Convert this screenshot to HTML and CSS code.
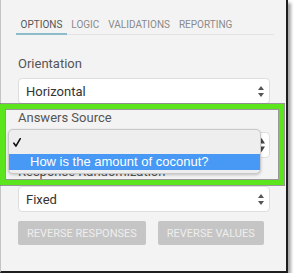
FILE: index.html
```html
<!DOCTYPE html>
<html>
<head>
<meta charset="utf-8">
<link rel="stylesheet" href="styles.css">
</head>
<body>
<div class="panel">
  <div class="tabs">
    <span class="tab active">Options</span>
    <span class="tab">Logic</span>
    <span class="tab">Validations</span>
    <span class="tab">Reporting</span>
  </div>
  <div class="form">
    <div class="label">Orientation</div>
    <div class="select">
      <span class="value">Horizontal</span>
      <svg class="arrows" width="6" height="11" viewBox="0 0 6 11"><path d="M3 0L6 4H0Z M0 7H6L3 11Z" fill="#555"/></svg>
    </div>
    <div class="label">Answers Source</div>
    <div class="field">
      <div class="select">
        <span class="value"></span>
        <svg class="arrows big" width="7" height="14" viewBox="0 0 7 14"><path d="M3.5 0L7 5.5H0Z M0 8.5H7L3.5 14Z" fill="#444"/></svg>
      </div>
      <div class="popup">
        <div class="item first"><svg class="check" width="8" height="9" viewBox="0 0 8 9"><path d="M0.9 5.2L2.9 8.1L7.3 0.7" fill="none" stroke="#111" stroke-width="1.6" stroke-linecap="round" stroke-linejoin="round"/></svg></div>
        <div class="item selected">How is the amount of coconut?</div>
      </div>
    </div>
    <div class="label">Response Randomization</div>
    <div class="select">
      <span class="value">Fixed</span>
      <svg class="arrows" width="6" height="11" viewBox="0 0 6 11"><path d="M3 0L6 4H0Z M0 7H6L3 11Z" fill="#555"/></svg>
    </div>
    <div class="buttons">
      <button class="btn">Reverse responses</button>
      <button class="btn">Reverse values</button>
    </div>
  </div>
  <div class="highlight"></div>
</div>
</body>
</html>
```
FILE: styles.css
```css
html, body {
  margin: 0;
  padding: 0;
  background: #ffffff;
}
body {
  font-family: Roboto, "Liberation Sans", sans-serif;
}
.panel {
  position: relative;
  width: 270px;
  height: 252px;
  padding: 19px 0 0 15px;
  background: #f3f3f3;
  border-left: 1px solid #c4c4c4;
  border-right: 2px solid #1e1e1e;
  border-bottom: 2px solid #1e1e1e;
  box-shadow: 3px 3px 3px rgba(0, 0, 0, 0.35);
}
.tabs {
  display: flex;
  width: 258px;
  border-bottom: 1px solid #e3e3e3;
}
.tab {
  font-size: 10px;
  line-height: 12px;
  text-transform: uppercase;
  color: #8a8a8a;
  padding: 0 4.5px 2px;
  border-bottom: 2px solid transparent;
  margin-bottom: -1px;
}
.tab.active {
  color: #555555;
  border-bottom-color: #8cbccc;
}
.form {
  padding: 21px 0 0 2px;
  width: 252px;
}
.label {
  font-size: 13px;
  line-height: 16px;
  color: #555555;
  margin: 6px 0;
}
.form > .label:first-child {
  margin-top: 0;
}
.select {
  box-sizing: border-box;
  width: 252px;
  height: 26px;
  background: #ffffff;
  border: 1px solid #dedede;
  border-radius: 4px;
  display: flex;
  align-items: center;
  justify-content: space-between;
  padding: 0 5px 0 7px;
}
.value {
  font-size: 13px;
  color: #333333;
}
.arrows {
  display: block;
}
.arrows.big {
  margin-right: -1px;
}
.field {
  position: relative;
}
.popup {
  position: absolute;
  left: -10px;
  top: -3px;
  width: 253px;
  box-sizing: border-box;
  padding: 4px 0 3px;
  background: #eeeeee;
  border: 1px solid #c9c9c9;
  border-radius: 5px;
  box-shadow: 0 1px 3px rgba(0, 0, 0, 0.2);
  font-family: "Liberation Sans", Arial, sans-serif;
  font-size: 13px;
  z-index: 2;
}
.item {
  height: 19px;
  line-height: 19px;
  padding-left: 21px;
  color: #000000;
}
.item.first {
  box-sizing: border-box;
  height: 20px;
  padding: 4px 0 0 4px;
}
.check {
  display: block;
}
.item.selected {
  height: 16px;
  line-height: 16px;
  background: #4799f5;
  color: #ffffff;
}
.buttons {
  display: flex;
  gap: 12px;
  margin-top: 9px;
}
.btn {
  height: 24px;
  padding: 0 9px;
  border: none;
  border-radius: 2px;
  background: #c5c5c5;
  color: #eeeeee;
  font-family: Roboto, "Liberation Sans", sans-serif;
  font-size: 11px;
  text-transform: uppercase;
}
.highlight {
  position: absolute;
  left: -1px;
  top: 104px;
  width: 284px;
  height: 81px;
  box-sizing: border-box;
  border: 5px solid #5ce51c;
  box-shadow: 0 0 0 1px rgba(90, 90, 90, 0.6), inset 0 0 0 1px rgba(90, 90, 90, 0.6);
  z-index: 3;
  pointer-events: none;
}
```
